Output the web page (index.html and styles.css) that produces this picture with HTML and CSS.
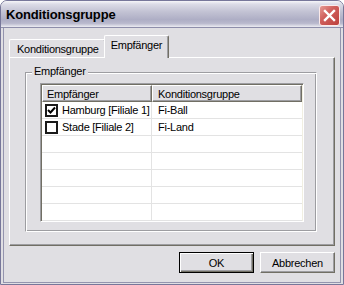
FILE: index.html
```html
<!DOCTYPE html>
<html>
	<head>
		<meta charset="UTF-8">
		<title>Konditionsgruppe</title>
		<link rel="stylesheet" href="styles.css">
	</head>
	<body>
		<div class="window">
			<div class="titlebar">
				<span class="title">Konditionsgruppe</span>
				<div class="close">
					<svg width="19" height="19" viewBox="0 0 19 19">
						<path d="M5 5 L14 14 M14 5 L5 14" stroke="#fff" stroke-width="2.4" stroke-linecap="square"/>
					</svg>
				</div>
			</div>
			<div class="client">
				<!-- Reiter -->
				<div class="tabs">
					<div class="tab">Konditionsgruppe</div>
					<div class="tab active">Empfänger</div>
				</div>
				<div class="panel">
					<div class="group">
						<span class="legend">Empfänger</span>
						<div class="list">
							<div class="row head">
								<div class="cell c1">Empfänger</div>
								<div class="cell c2">Konditionsgruppe</div>
							</div>
							<div class="row">
								<div class="cell c1">
									<span class="check">
										<svg width="9" height="9" viewBox="0 0 9 9">
											<path d="M1 4 L3.5 6.5 L8 1.5" stroke="#000" stroke-width="2" fill="none"/>
										</svg>
									</span>Hamburg [Filiale 1]
								</div>
								<div class="cell c2">Fi-Ball</div>
							</div>
							<div class="row">
								<div class="cell c1"><span class="check"></span>Stade [Filiale 2]</div>
								<div class="cell c2">Fi-Land</div>
							</div>
							<div class="row"><div class="cell c1"></div><div class="cell c2"></div></div>
							<div class="row"><div class="cell c1"></div><div class="cell c2"></div></div>
							<div class="row"><div class="cell c1"></div><div class="cell c2"></div></div>
							<div class="row"><div class="cell c1"></div><div class="cell c2"></div></div>
							<div class="row"><div class="cell c1"></div><div class="cell c2"></div></div>
						</div>
					</div>
				</div>
				<div class="buttons">
					<div class="btn default"><span>OK</span></div>
					<div class="btn"><span>Abbrechen</span></div>
				</div>
			</div>
		</div>
	</body>
</html>
```

FILE: styles.css
```css
body{
	margin: 0;
	font-family: "Liberation Sans", Arial, sans-serif;
	font-size: 11px;
	letter-spacing: -0.25px;
	color: #000;
}
.window{
	width: 344px;
	height: 285px;
	box-sizing: border-box;
	display: flex;
	flex-direction: column;
	background: #e0dfe3;
	border: 1px solid #77779a;
	border-radius: 7px 7px 0 0;
	overflow: hidden;
}
.titlebar{
	height: 26px;
	flex: none;
	display: flex;
	justify-content: space-between;
	align-items: flex-start;
	padding: 0 3px 0 5px;
	border-bottom: 1px solid #8e8eaa;
	background: linear-gradient(180deg, #f6f6f9 0, #dcdce7 12%, #c3c3d4 40%, #aeaec5 72%, #b9b9cd 86%, #ececf2 100%);
}
.title{
	font-size: 13px;
	font-weight: bold;
	letter-spacing: -0.15px;
	line-height: 26px;
	padding-top: 1px;
}
.close{
	width: 19px;
	height: 19px;
	margin-top: 4px;
	border: 1px solid #fbeaea;
	border-radius: 3px;
	background: linear-gradient(135deg, #e69a94 0, #d0605c 40%, #bd3f3c 100%);
}
.close svg{
	display: block;
}
.client{
	flex: 1;
	display: flex;
	flex-direction: column;
	margin: 0 2px 1px;
	border: 1px solid #9494ae;
	border-top: none;
	padding: 7px 5px 0;
}
.tabs{
	display: flex;
	align-items: flex-end;
	height: 22px;
	flex: none;
}
.tab{
	box-sizing: border-box;
	height: 18px;
	padding: 2px 6px 0 7px;
	border: 1px solid;
	border-color: #fff #716f64 transparent #fff;
	border-bottom: none;
	border-radius: 2px 2px 0 0;
	box-shadow: inset -1px 0 #9d9da1;
	line-height: 14px;
}
.tab.active{
	height: 23px;
	margin: 0 -2px -1px;
	padding: 2px 6px 0 6px;
	position: relative;
	z-index: 1;
	background: #e0dfe3;
}
.panel{
	box-sizing: border-box;
	height: 189px;
	flex: none;
	border: 1px solid;
	border-color: #fff #716f64 #716f64 #fff;
	box-shadow: inset -1px -1px #9d9da1;
	padding: 14px 17px 13px 15px;
}
.group{
	position: relative;
	height: 160px;
	box-sizing: border-box;
	border: 1px solid;
	border-color: #9d9da1 #fff #fff #9d9da1;
	box-shadow: inset 1px 1px #fff, inset -1px -1px #9d9da1;
	padding: 10px 12px 9px 14px;
}
.legend{
	position: absolute;
	left: 6px;
	top: -8px;
	padding: 0 2px;
	line-height: 13px;
	background: #e0dfe3;
}
.list{
	box-sizing: border-box;
	height: 139px;
	overflow: hidden;
	background: #fff;
	border: 1px solid;
	border-color: #9d9da1 #fff #fff #9d9da1;
	box-shadow: inset 1px 1px #716f64, inset -1px -1px #f1efe2;
	padding: 1px;
}
.row{
	display: flex;
	height: 17px;
	box-sizing: border-box;
	border-bottom: 1px solid #e3e3e3;
}
.cell{
	display: flex;
	align-items: center;
	box-sizing: border-box;
	white-space: nowrap;
}
.c1{
	width: 110px;
	padding-left: 3px;
	border-right: 1px solid #e3e3e3;
}
.c2{
	flex: 1;
	padding-left: 6px;
}
.row.head{
	height: 17px;
	border-bottom: none;
	background: #e0dfe3;
}
.head .cell{
	border: 1px solid;
	border-color: #fff #716f64 #716f64 #fff;
	box-shadow: inset -1px -1px #9d9da1;
	padding-left: 4px;
}
.head .c2{
	padding-left: 5px;
}
.check{
	width: 13px;
	height: 13px;
	box-sizing: border-box;
	border: 2px solid #1a1a1a;
	margin-right: 4px;
	display: flex;
	align-items: center;
	justify-content: center;
	background: #fff;
}
.check svg{
	display: block;
}
.buttons{
	display: flex;
	justify-content: flex-end;
	gap: 6px;
	margin-top: 6px;
}
.btn{
	box-sizing: border-box;
	width: 75px;
	height: 21px;
	display: flex;
	align-items: center;
	justify-content: center;
	border: 1px solid;
	border-color: #fff #716f64 #716f64 #fff;
	box-shadow: inset -1px -1px #9d9da1;
}
.btn.default{
	border: 1px solid #000;
	box-shadow: inset 1px 1px #fff, inset -1px -1px #716f64, inset -2px -2px #9d9da1;
}
```
